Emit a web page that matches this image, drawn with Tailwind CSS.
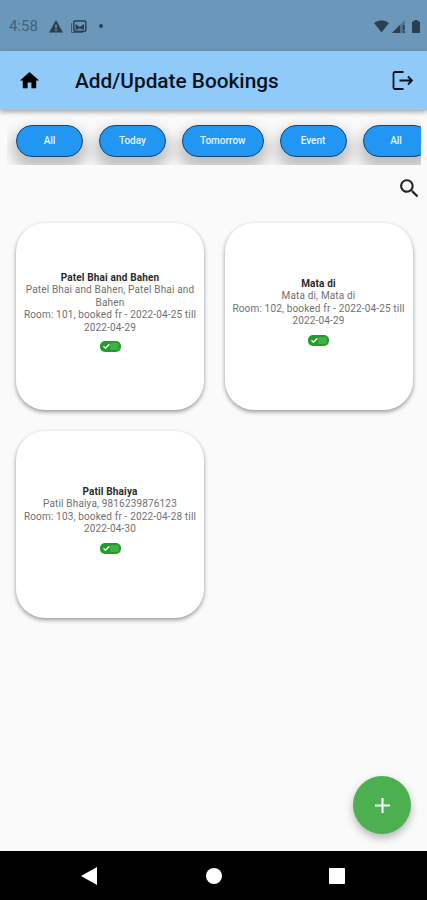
<!DOCTYPE html>
<html lang="en">
<head>
<meta charset="utf-8">
<title>Add/Update Bookings</title>
<script src="https://cdn.jsdelivr.net/npm/@tailwindcss/browser@4"></script>
</head>
<body class="font-['Roboto',sans-serif] bg-[#fafafa]">
<div class="relative w-[427px] h-[900px] overflow-hidden flex flex-col bg-[#fafafa]">
  <div class="h-[51px] shrink-0 bg-[#6b97ba] flex items-center pl-[9px] pr-[7px] pt-[2px] text-[#2b3f50]">
    <span class="text-[15px] leading-none w-[40px] text-[#42617a]">4:58</span>
    <svg class="w-[14px] h-[13px]" viewBox="0 0 14 13"><path fill="currentColor" fill-rule="evenodd" d="M7 0 14 12.5H0ZM6.3 4.5V8.4H7.7V4.5ZM6.3 9.6V11H7.7V9.6Z"/></svg>
    <svg class="w-[17px] h-[14px] ml-[7px]" viewBox="0 0 17 14" fill="none" stroke="currentColor"><path d="M1.500 3V12.500H13" stroke-width="1" stroke-opacity=".7"/><rect x="3.8" y="1" width="12" height="10.2" rx="1" stroke-width="1.4"/><path d="M5.5 10V4L9.8 7 14 4V10L9.8 8.5Z" fill="currentColor" stroke="none"/></svg>
    <span class="w-[4px] h-[4px] rounded-full bg-[#2b3f50] ml-[12px] -mt-px"></span>
    <svg class="w-[15px] h-[13px] ml-auto" viewBox="0 0 15 13"><path fill="currentColor" d="M0 3Q7.500-2.500 15 3L7.500 12.500Z"/></svg>
    <svg class="w-[13px] h-[13px] ml-[3px]" viewBox="0 0 13 13"><path fill="currentColor" fill-opacity=".4" d="M13 0V13H0Z"/><path fill="currentColor" d="M8 5V13H0ZM11 5h1.500v5h-1.500zM11 11h1.500v2h-1.500z"/></svg>
    <svg class="w-[8px] h-[13px] ml-[7px]" viewBox="0 0 8 13"><path fill="currentColor" d="M2.300 0H5.700V1.300H7Q8 1.300 8 2.300V12Q8 13 7 13H1Q0 13 0 12V2.300Q0 1.300 1 1.300H2.300Z"/></svg>
  </div>
  <header class="relative z-10 h-[59px] shrink-0 bg-[#90caf9] flex items-center pl-[18px] pr-[13px] shadow-[0_2px_5px_rgba(0,0,0,0.35)]">
    <svg class="w-[23px] h-[23px]" viewBox="0 0 24 24"><path d="M10 20v-6h4v6h5v-8h3L12 3 2 12h3v8z"/></svg>
    <h1 class="ml-[34px] mt-[2px] text-[20.8px] font-medium leading-none text-[#07121c] whitespace-nowrap">Add/Update Bookings</h1>
    <svg class="w-[23px] h-[22px] ml-auto" viewBox="0 0 23 22" fill="none" stroke="#06111a" stroke-width="1.800"><path d="M12.500 2H4Q2.500 2 2.500 3.500V17.500Q2.500 19 4 19H12.500M8.500 10.500H21M17 6.500 21 10.500 17 14.500"/></svg>
  </header>
  <nav class="ml-[7px] w-[414px] h-[55px] shrink-0 overflow-hidden flex gap-[16px] pt-[15px] pl-[9px] text-[10px] font-medium text-white/90">
    <button class="w-[67px] h-[32px] shrink-0 rounded-full border border-[#17466f] bg-[#2196f3] pb-[2px] shadow-[0_8px_14px_4px_rgba(0,0,0,0.24)]">All</button>
    <button class="w-[67px] h-[32px] shrink-0 rounded-full border border-[#17466f] bg-[#2196f3] pb-[2px] shadow-[0_8px_14px_4px_rgba(0,0,0,0.24)]">Today</button>
    <button class="w-[81.500px] h-[32px] shrink-0 rounded-full border border-[#17466f] bg-[#2196f3] pb-[2px] shadow-[0_8px_14px_4px_rgba(0,0,0,0.24)]">Tomorrow</button>
    <button class="w-[67px] h-[32px] shrink-0 rounded-full border border-[#17466f] bg-[#2196f3] pb-[2px] shadow-[0_8px_14px_4px_rgba(0,0,0,0.24)]">Event</button>
    <button class="w-[67px] h-[32px] shrink-0 rounded-full border border-[#17466f] bg-[#2196f3] pb-[2px] shadow-[0_8px_14px_4px_rgba(0,0,0,0.24)]">All</button>
  </nav>
  <div class="h-[57.500px] shrink-0 flex justify-end pr-[5px] pt-[11px]">
    <svg class="w-[25px] h-[25px]" viewBox="0 0 24 24" fill="#222"><path d="M15.500 14h-.79l-.28-.27C15.410 12.590 16 11.110 16 9.500 16 5.910 13.090 3 9.500 3S3 5.910 3 9.500 5.910 16 9.500 16c1.610 0 3.090-.59 4.230-1.570l.27.28v.79l5 4.990L20.490 19zM9.500 14C7.010 14 5 11.990 5 9.500S7.010 5 9.500 5 14 7.010 14 9.500 11.990 14 9.500 14z"/></svg>
  </div>
  <main class="grid grid-cols-[188px_188px] gap-x-[20.500px] gap-y-[20.500px] pl-[16px] text-center text-[10px] tracking-[0.160px] leading-[12.500px] text-[#707070]">
    <article class="h-[187.500px] rounded-[29px] bg-white shadow-[0_2px_4px_rgba(0,0,0,0.4)] flex flex-col items-center justify-center whitespace-nowrap">
      <h2 class="font-bold text-[#2a2a2a]">Patel Bhai and Bahen</h2>
      <p>Patel Bhai and Bahen, Patel Bhai and<br>Bahen</p>
      <p>Room: 101, booked fr - 2022-04-25 till<br>2022-04-29</p>
      <svg class="w-[21px] h-[11px] mt-[7px] mb-[9px]" viewBox="0 0 21 11"><rect width="21" height="11" rx="5" fill="#249a2b"/><rect x="10" y="2" width="9" height="7" rx="2" fill="#43b047"/><path d="M3.500 5.300 5.500 7.300 9.300 3.300" fill="none" stroke="white" stroke-width="1.300"/></svg>
    </article>
    <article class="h-[187.500px] rounded-[29px] bg-white shadow-[0_2px_4px_rgba(0,0,0,0.4)] flex flex-col items-center justify-center whitespace-nowrap">
      <h2 class="font-bold text-[#2a2a2a]">Mata di</h2>
      <p>Mata di, Mata di</p>
      <p>Room: 102, booked fr - 2022-04-25 till<br>2022-04-29</p>
      <svg class="w-[21px] h-[11px] mt-[7px] mb-[9px]" viewBox="0 0 21 11"><rect width="21" height="11" rx="5" fill="#249a2b"/><rect x="10" y="2" width="9" height="7" rx="2" fill="#43b047"/><path d="M3.500 5.300 5.500 7.300 9.300 3.300" fill="none" stroke="white" stroke-width="1.300"/></svg>
    </article>
    <article class="h-[187px] rounded-[29px] bg-white shadow-[0_2px_4px_rgba(0,0,0,0.4)] flex flex-col items-center justify-center whitespace-nowrap">
      <h2 class="font-bold text-[#2a2a2a]">Patil Bhaiya</h2>
      <p>Patil Bhaiya, 9816239876123</p>
      <p>Room: 103, booked fr - 2022-04-28 till<br>2022-04-30</p>
      <svg class="w-[21px] h-[11px] mt-[7px] mb-[9px]" viewBox="0 0 21 11"><rect width="21" height="11" rx="5" fill="#249a2b"/><rect x="10" y="2" width="9" height="7" rx="2" fill="#43b047"/><path d="M3.500 5.300 5.500 7.300 9.300 3.300" fill="none" stroke="white" stroke-width="1.300"/></svg>
    </article>
  </main>
  <button class="absolute right-[16px] bottom-[66px] w-[58px] h-[58px] rounded-full bg-[#4caf50] shadow-[0_4px_8px_rgba(0,0,0,0.28)] flex items-center justify-center" aria-label="Add booking">
    <svg class="w-[15px] h-[15px]" viewBox="0 0 15 15"><path d="M7.500 0V15M0 7.500H15" stroke="white" stroke-width="2"/></svg>
  </button>
  <footer class="mt-auto h-[49px] shrink-0 bg-black flex items-center pl-[81px] pr-[82px]">
    <svg class="w-[16px] h-[18px]" viewBox="0 0 16 18"><path d="M16 0V18L0 9Z" fill="white"/></svg>
    <span class="ml-[109px] w-[16px] h-[16px] rounded-full bg-white"></span>
    <span class="ml-auto w-[16px] h-[16px] rounded-[1px] bg-white"></span>
  </footer>
</div>
</body>
</html>
